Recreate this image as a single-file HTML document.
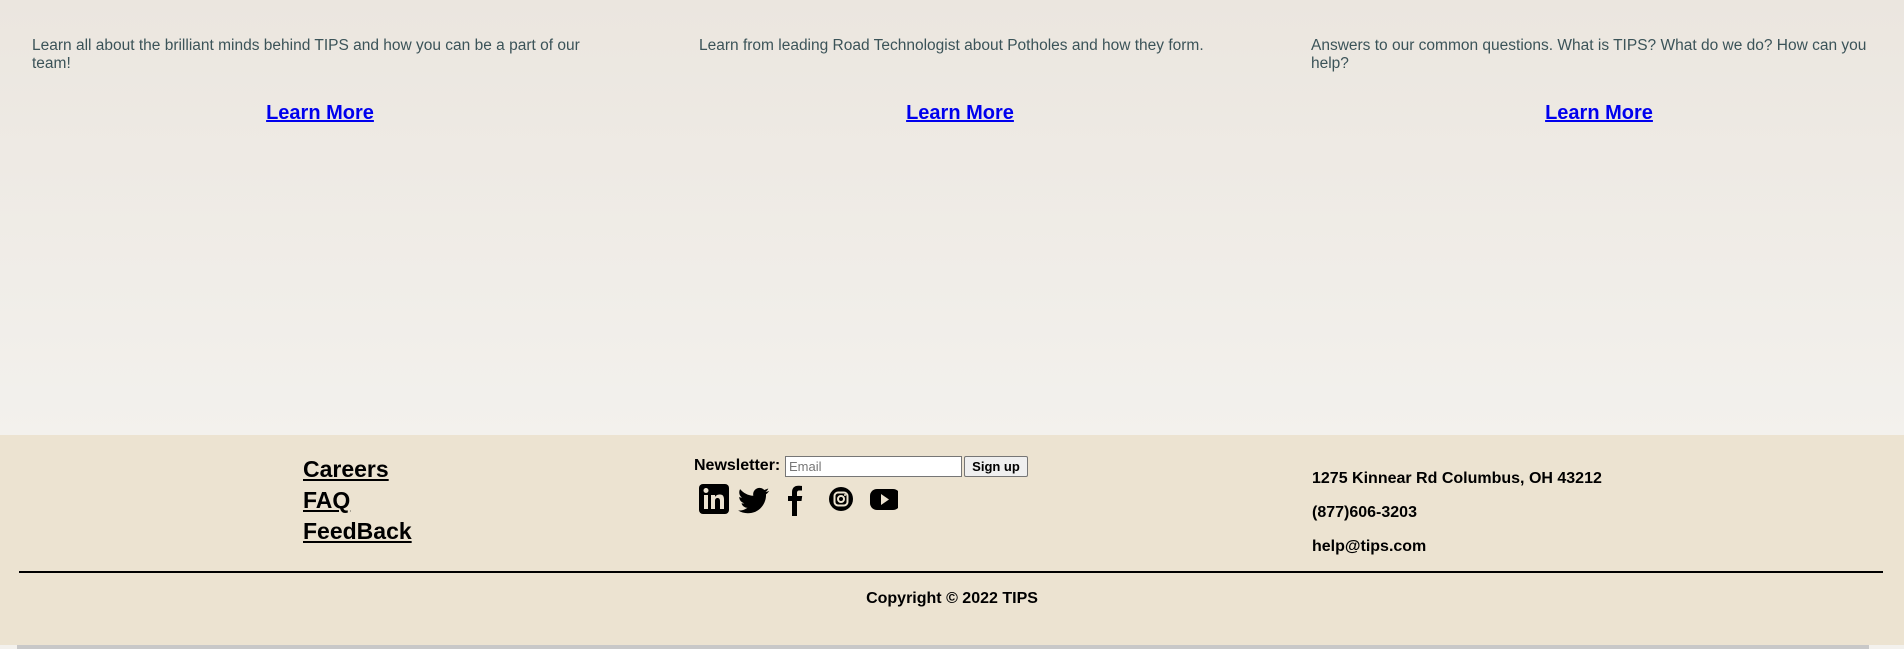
<!DOCTYPE html>
<html><head><meta charset="utf-8"><style>
body{margin:0;width:1904px;height:649px;position:relative;overflow:hidden;font-family:"Liberation Sans",Arial,sans-serif;background:linear-gradient(#ebe6df,#f3f1ed 435px);}
.a{position:absolute;}
.p{font-size:15.5px;color:#3b5358;line-height:18px;}
.lm{font-size:20px;font-weight:bold;color:#0000ee;text-decoration:underline;transform:translateX(-50%);white-space:nowrap;}
footer{position:absolute;left:0;top:435px;width:1904px;height:210px;background:#ece3d1;}
.fl{font-size:23px;font-weight:bold;color:#000;text-decoration:underline;}
.ad{font-size:16px;font-weight:bold;color:#000;}
</style></head><body>
<div class="a p" style="left:32px;top:37px;width:590px">Learn all about the brilliant minds behind TIPS and how you can be a part of our team!</div>
<div class="a p" style="left:699px;top:37px;width:600px">Learn from leading Road Technologist about Potholes and how they form.</div>
<div class="a p" style="left:1311px;top:37px;width:590px">Answers to our common questions. What is TIPS? What do we do? How can you help?</div>
<div class="a lm" style="left:320px;top:102px">Learn More</div>
<div class="a lm" style="left:960px;top:102px">Learn More</div>
<div class="a lm" style="left:1599px;top:102px">Learn More</div>
<footer>
<div class="a fl" style="left:303px;top:21px">Careers</div>
<div class="a fl" style="left:303px;top:52px">FAQ</div>
<div class="a fl" style="left:303px;top:83px">FeedBack</div>
<div class="a" style="left:694px;top:22px;font-size:16px;font-weight:bold;">Newsletter:</div>
<div class="a" style="left:785px;top:21px;background:#fff;border:1px solid #767676;font-size:13px;color:#777;line-height:19px;padding-left:3px;box-sizing:border-box;width:177px;height:21px">Email</div>
<div class="a" style="left:964px;top:21px;width:64px;height:21px;background:#efefef;border:1px solid #767676;box-sizing:border-box;font-size:13px;font-weight:bold;text-align:center;line-height:19px;border-radius:2px">Sign up</div>
<svg class="a" style="left:698px;top:48px" width="200" height="34" viewBox="0 0 200 34">
<rect x="1" y="1" width="30" height="30" rx="4" fill="#000"/>
<rect x="6" y="12" width="4" height="14" fill="#ece3d1"/><circle cx="8" cy="7.5" r="2.5" fill="#ece3d1"/>
<path d="M13 12h4v2c1-2 3-2.5 5-2.5 3 0 4 2 4 5V26h-4v-8c0-2-1-3-2.5-3S17 16 17 18v8h-4z" fill="#ece3d1"/>
<path transform="translate(40,2) scale(1.3)" d="M23.954 4.569c-.885.389-1.83.654-2.825.775 1.014-.611 1.794-1.574 2.163-2.723-.951.555-2.005.959-3.127 1.184-.896-.959-2.173-1.559-3.591-1.559-2.717 0-4.92 2.203-4.92 4.917 0 .39.045.765.127 1.124C7.691 8.094 4.066 6.13 1.64 3.161c-.427.722-.666 1.561-.666 2.475 0 1.71.87 3.213 2.188 4.096-.807-.026-1.566-.248-2.228-.616v.061c0 2.385 1.693 4.374 3.946 4.827-.413.111-.849.171-1.296.171-.314 0-.615-.03-.916-.086.631 1.953 2.445 3.377 4.604 3.417-1.68 1.319-3.809 2.105-6.102 2.105-.39 0-.779-.023-1.17-.067 2.189 1.394 4.768 2.209 7.557 2.209 9.054 0 13.999-7.496 13.999-13.986 0-.209 0-.42-.015-.63.961-.689 1.8-1.56 2.46-2.548l-.047-.02z" fill="#000"/>
<path d="M99 33V18h4.5l.7-5H99v-3c0-1.5.5-2.5 2.5-2.5H104V3c-.5 0-2-.2-3.8-.2-3.8 0-6.2 2.3-6.2 6.5V13h-4v5h4v15z" fill="#000"/>
<circle cx="143" cy="16" r="12" fill="#000"/><rect x="136.5" y="9.5" width="13" height="13" rx="3.5" fill="none" stroke="#ece3d1" stroke-width="2"/><circle cx="143" cy="16" r="3" fill="none" stroke="#ece3d1" stroke-width="2"/><circle cx="147" cy="12" r="1" fill="#ece3d1"/>
<rect x="172" y="6" width="30" height="21" rx="7" fill="#000"/><path d="M183 11v11l8-5.5z" fill="#ece3d1"/>
</svg>
<div class="a ad" style="left:1312px;top:35px">1275 Kinnear Rd Columbus, OH 43212</div>
<div class="a ad" style="left:1312px;top:69px">(877)606-3203</div>
<div class="a ad" style="left:1312px;top:103px">help@tips.com</div>
<div class="a" style="left:19px;top:136px;width:1864px;height:2px;background:#000"></div>
<div class="a" style="left:0;width:1904px;top:155px;text-align:center;font-size:16px;font-weight:bold;">Copyright © 2022 TIPS</div>
</footer>
<div class="a" style="left:17px;top:645px;width:1852px;height:4px;background:#c8c8c8"></div>
</body></html>
